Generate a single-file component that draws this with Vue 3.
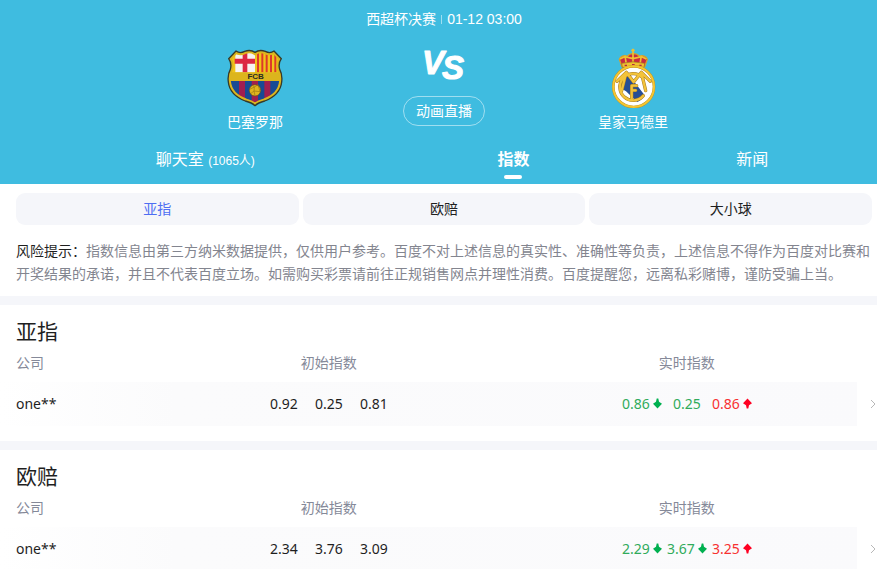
<template>
  <div class="page">
    <header class="header">
      <div class="match-info">
        <span>西超杯决赛</span>
        <span class="separator"></span>
        <span>01-12 03:00</span>
      </div>

      <div class="match">
        <div class="team">
          <svg class="crest barcelona" viewBox="51 27 168 174" aria-hidden="true">
            <defs>
              <clipPath id="shield">
                <path :d="shield" />
              </clipPath>
            </defs>
            <g clip-path="url(#shield)">
              <rect x="50" y="26" width="170" height="176" fill="#f0c419" />
              <rect x="76" y="35" width="59" height="62" fill="#f6f3f0" />
              <path d="M98 30h14v26h23v15h-23v26H98V71H74V56h24z" fill="#dc2741" />
              <path d="M144 30v67M157 30v67M170 30v67M183 30v67M196 30v67" stroke="#dc3a2a" stroke-width="6" />
              <rect x="50" y="97" width="170" height="26" fill="#dcb51d" />
              <rect x="50" y="123" width="170" height="80" fill="#174a94" />
              <path d="M87 123h18v80H87zM125 123h19v80h-19zM163 123h18v80h-18z" fill="#a01e50" />
              <path :d="shield" fill="none" stroke="#dcb51d" stroke-width="16" />
            </g>
            <text x="137" y="118" class="crest-text">FCB</text>
            <circle cx="135" cy="151" r="17" fill="#dfb51e" stroke="#6b5415" stroke-width="2" />
            <path d="M119 148l14-7 11-7M122 161l10-8 18 2M133 141l-1 12M144 134l6 21M132 153l3 14M128 136l5 5" fill="none" stroke="#997613" stroke-width="2" />
            <path :d="shield" fill="none" stroke="#343a2c" stroke-width="4" stroke-linejoin="round" />
          </svg>
          <span>巴塞罗那</span>
        </div>

        <div class="versus">
          <svg class="vs" viewBox="0 0 42 32" role="img" aria-label="VS">
            <text x="-1" y="26">V</text>
            <text x="19" y="31">S</text>
          </svg>
          <button type="button" class="live-btn">动画直播</button>
        </div>

        <div class="team">
          <svg class="crest madrid" viewBox="66 24 135 180" aria-hidden="true">
            <path d="M99 80l-8-22c3-10 14-13 24-9 5-7 12-8 18-8s13 1 18 8c10-4 21-1 24 9l-8 22-34-5z" fill="#c92943" stroke="#d6a326" stroke-width="4" />
            <path d="M132 26v14M127 31h10M108 47l4 26M157 47l-4 26M132 40v33M93 57l14-7 25 6 26-6 14 7" fill="none" stroke="#efc132" stroke-width="5" />
            <path d="M98 70q34-9 69 0l-2 12H100z" fill="#efc132" stroke="#9c671f" stroke-width="2" />
            <path d="M107 76h7M129 74h8M151 76h7" stroke="#b52943" stroke-width="4" />
            <circle cx="134" cy="140" r="61" fill="#fff" stroke="#b98d22" stroke-width="8" />
            <circle cx="134" cy="140" r="61" fill="none" stroke="#f5c631" stroke-width="6" />
            <path d="M97 113l18-15 52 68q-7 14-22 20l-34-32-22-13q1-16 8-28z" fill="#274e94" />
            <g fill="none" stroke-linecap="round" stroke-linejoin="round">
              <path :d="monogram" stroke="#a77b25" stroke-width="10" />
              <path :d="monogram" stroke="#f3c33a" stroke-width="7" />
            </g>
          </svg>
          <span>皇家马德里</span>
        </div>
      </div>

      <nav class="tabs">
        <a href="#chat">聊天室 <small>(1065人)</small></a>
        <a href="#odds" class="active" aria-current="page">指数</a>
        <a href="#news">新闻</a>
      </nav>
    </header>

    <main>
      <div class="filters">
        <button
          v-for="name in filters"
          :key="name"
          type="button"
          :class="{ selected: name === current }"
          @click="current = name"
        >
          {{ name }}
        </button>
      </div>

      <p class="notice">
        <strong>风险提示：</strong>指数信息由第三方纳米数据提供，仅供用户参考。百度不对上述信息的真实性、准确性等负责，上述信息不得作为百度对比赛和开奖结果的承诺，并且不代表百度立场。如需购买彩票请前往正规销售网点并理性消费。百度提醒您，远离私彩赌博，谨防受骗上当。
      </p>

      <section v-for="group in groups" :key="group.title" class="odds">
        <h2>{{ group.title }}</h2>
        <table>
          <colgroup>
            <col class="col-company" />
            <col class="col-initial" />
            <col />
            <col class="col-more" />
          </colgroup>
          <thead>
            <tr>
              <th class="company">公司</th>
              <th>初始指数</th>
              <th class="live">实时指数</th>
              <td></td>
            </tr>
          </thead>
          <tbody>
            <tr>
              <td class="company">one**</td>
              <td>
                <div class="values">
                  <span v-for="value in group.initial" :key="value">{{ value }}</span>
                </div>
              </td>
              <td class="live">
                <div class="values">
                  <span v-for="(item, i) in group.live" :key="i" :class="item.color">
                    {{ item.value }}
                    <svg v-if="item.trend" class="trend" :class="item.trend" viewBox="0 0 9 11" aria-hidden="true">
                      <path d="M4.5 0.5L9 5.2 6 7.2 5.3 10.5H3.7L3 7.2 0 5.2z" />
                    </svg>
                  </span>
                </div>
              </td>
              <td class="more">
                <a href="#detail" aria-label="查看详情">
                  <svg viewBox="0 0 6 10" aria-hidden="true">
                    <path d="M1 1l4 4-4 4" />
                  </svg>
                </a>
              </td>
            </tr>
          </tbody>
        </table>
      </section>
    </main>
  </div>
</template>

<script setup>
import { ref } from 'vue'

const shield =
  'M78 33Q90 42 104 34Q122 28 135 37Q148 28 166 34Q180 42 192 33L214 56Q204 70 209 88Q218 104 215 126Q211 165 164 183Q144 188 135 197Q126 188 106 183Q59 165 55 126Q52 104 61 88Q66 70 56 56Z'

const monogram =
  'M160 112A40 40 0 1 0 163 167M84 124L112 97L134 126L157 97L184 124M157 97L170 152M112 97L98 152M128 176V137H143M128 151H140'

const filters = ['亚指', '欧赔', '大小球']
const current = ref('亚指')

const groups = [
  {
    title: '亚指',
    initial: ['0.92', '0.25', '0.81'],
    live: [
      { value: '0.86', color: 'green', trend: 'down' },
      { value: '0.25', color: 'green' },
      { value: '0.86', color: 'red', trend: 'up' }
    ]
  },
  {
    title: '欧赔',
    initial: ['2.34', '3.76', '3.09'],
    live: [
      { value: '2.29', color: 'green', trend: 'down' },
      { value: '3.67', color: 'green', trend: 'down' },
      { value: '3.25', color: 'red', trend: 'up' }
    ]
  }
]
</script>

<style>
body {
  background-color: #fff;
}
</style>

<style scoped>
.page {
  font-family: 'Noto Sans', 'Noto Sans CJK SC', sans-serif;
  font-size: 14px;
  color: #1f1f1f;
}

.page a {
  color: inherit;
  text-decoration: none;
}

.page button {
  font: inherit;
  border: none;
  cursor: pointer;
}

.header {
  padding: 8px 0 0 11px;
  background-color: #3fbce0;
  color: #fff;
  font-family: 'Liberation Sans', 'Noto Sans CJK SC', sans-serif;
}

.match-info {
  display: flex;
  justify-content: center;
  align-items: center;
  line-height: 22px;
}

.separator {
  width: 1px;
  height: 9px;
  margin: 0 5px;
  background-color: rgba(255, 255, 255, 0.5);
}

.match {
  display: flex;
  justify-content: center;
  padding-top: 18px;
}

.team,
.versus {
  width: 189px;
  display: flex;
  flex-direction: column;
  align-items: center;
}

.team {
  line-height: 22px;
}

.crest {
  height: 60px;
  margin-bottom: 3px;
}

.barcelona {
  width: 56px;
}

.madrid {
  width: 45px;
}

.crest-text {
  font: bold 24px 'Liberation Sans', sans-serif;
  text-anchor: middle;
  fill: #292b24;
}

.vs {
  width: 42px;
  height: 32px;
  margin-bottom: 16px;
  overflow: visible;
}

.vs text {
  font: italic bold 33px 'Liberation Sans', sans-serif;
  fill: #fff;
  stroke: #fff;
  stroke-width: 1px;
  stroke-linejoin: round;
}

.page .live-btn {
  height: 30px;
  padding: 0 12px 2px;
  border: 1px solid rgba(255, 255, 255, 0.5);
  border-radius: 15px;
  background-color: transparent;
  color: #fff;
}

.tabs {
  display: grid;
  grid-template-columns: 389fr 228fr 250fr;
  padding-top: 12px;
  font-size: 16px;
  line-height: 30px;
  text-align: center;
}

.tabs a {
  height: 39px;
}

.tabs small {
  font-size: 12px;
}

.tabs .active {
  font-weight: bold;
}

.active::after {
  content: '';
  display: block;
  width: 18px;
  height: 4px;
  margin: 0 auto;
  border-radius: 2px;
  background-color: #fff;
}

.filters {
  display: grid;
  grid-template-columns: repeat(3, 1fr);
  gap: 4px;
  padding: 9px 5px 0 16px;
}

.filters button {
  height: 32px;
  padding-bottom: 3px;
  border-radius: 9px;
  background-color: #f5f6fa;
  color: #1f1f1f;
}

.filters .selected {
  color: #4e6ef2;
}

.notice {
  margin: 0;
  padding: 14px 5px 11px 16px;
  color: #83858f;
  line-height: 23px;
}

.notice strong {
  color: #1f1f1f;
  font-weight: normal;
}

.odds {
  padding: 11px 0 15px;
  border-top: 9px solid #f5f6fa;
}

.odds h2 {
  margin: 0;
  padding-left: 16px;
  font-size: 21px;
  font-weight: normal;
  line-height: 30px;
}

table {
  width: 100%;
  table-layout: fixed;
  border-collapse: collapse;
}

.col-company {
  width: 17%;
}

.col-initial {
  width: 41%;
}

.col-more {
  width: 20px;
}

th,
td {
  padding: 0 0 2px;
  text-align: center;
}

th {
  height: 33px;
  padding-bottom: 3px;
  color: #858999;
  font-weight: normal;
  line-height: 22px;
}

tbody tr {
  height: 44px;
  background: linear-gradient(90deg, #fff, #fbfbfc 20%, #fafafc);
}

.company {
  padding-left: 16px;
  text-align: left;
}

.live {
  padding-left: 8px;
}

.values {
  display: flex;
  justify-content: center;
}

.values span {
  width: 45px;
  display: flex;
  justify-content: center;
  align-items: center;
  gap: 3px;
}

.green {
  color: #30ab5b;
}

.red {
  color: #f73131;
}

.trend {
  width: 9px;
  height: 11px;
}

.trend.down {
  fill: #00b050;
  transform: rotate(180deg);
}

.trend.up {
  fill: #ff0022;
}

.more {
  background-color: #fff;
  text-align: right;
}

.more svg {
  width: 6px;
  height: 10px;
  margin-right: 1px;
  fill: none;
  stroke: #b8b8b8;
  stroke-width: 1px;
}
</style>
